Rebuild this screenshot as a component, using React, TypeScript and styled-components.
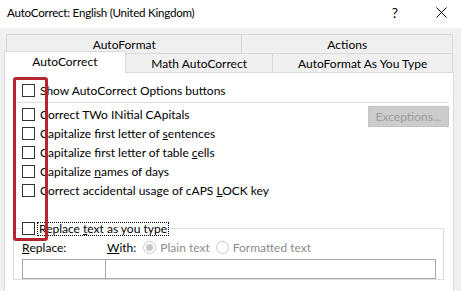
import styled, { createGlobalStyle } from 'styled-components'

const font = `"Lato", "Liberation Sans", sans-serif`

const Global = createGlobalStyle`
  html, body { margin: 0; padding: 0; }
  body {
    width: 461px;
    height: 291px;
    overflow: hidden;
    background: #f0f0f0;
    font-family: ${font};
    font-size: 12px;
    color: #000;
  }
`

const Window = styled.div`
  position: relative;
  width: 461px;
  height: 291px;
  background: #f0f0f0;
  overflow: hidden;
`

const TitleBar = styled.div`
  height: 28px;
  background: #fff;
  display: flex;
  align-items: center;
  padding-left: 7px;
`

const Title = styled.div`
  flex: 1;
  font-size: 11.6px;
  letter-spacing: -0.25px;
  margin-top: -3px;
`

const TitleButton = styled.div<{ w: number }>`
  width: ${p => p.w}px;
  height: 28px;
  display: flex;
  align-items: center;
  justify-content: center;
  font-size: 14px;
  margin-top: -3px;
`

const Body = styled.div`
  padding: 6px 7px 0 4px;
`

const TabRow = styled.div<{ indent?: number }>`
  display: flex;
  align-items: flex-end;
  margin-left: ${p => p.indent || 0}px;
  margin-right: 1px;
  height: 19px;
`

const Tab = styled.div<{ w: number, active?: boolean }>`
  width: ${p => p.w}px;
  height: ${p => p.active ? 22 : 19}px;
  box-sizing: border-box;
  margin-left: -1px;
  margin-bottom: ${p => p.active ? -1 : 0}px;
  position: relative;
  z-index: ${p => p.active ? 2 : 1};
  border: 1px solid #d9d9d9;
  border-bottom: none;
  background: ${p => p.active ? '#fff' : '#f0f0f0'};
  display: flex;
  align-items: center;
  justify-content: center;
  padding-bottom: ${p => p.active ? 2 : 0}px;
  white-space: nowrap;
  &:first-child { margin-left: 0; }
`

const Panel = styled.div`
  background: #fff;
  border: 1px solid #d9d9d9;
  height: 240px;
  box-sizing: border-box;
  padding: 8px 4px 0 0;
`

const Row = styled.div`
  display: flex;
  align-items: center;
  height: 19px;
  padding-left: 17px;
`

const Gap = styled.div`
  height: 19px;
`

const Separator = styled.div`
  height: 1px;
  background: #dcdcdc;
  margin: 2px 0 2px 12px;
`

const Box = styled.span`
  width: 13px;
  height: 13px;
  box-sizing: border-box;
  border: 1px solid #333;
  background: #fff;
  flex: none;
`

const Label = styled.span<{ focused?: boolean }>`
  margin-left: ${p => p.focused ? 2 : 4}px;
  padding: 0 ${p => p.focused ? 1 : 0}px;
  line-height: 12px;
  border: 1px dotted ${p => p.focused ? '#000' : 'transparent'};
  white-space: nowrap;
`

const Button = styled.div`
  margin-left: auto;
  align-self: flex-start;
  margin-top: 1px;
  width: 81px;
  height: 21px;
  box-sizing: border-box;
  border: 1px solid #c4c4c4;
  background: #cccccc;
  color: #9b9b9b;
  display: flex;
  align-items: center;
  justify-content: center;
`

const Group = styled.fieldset`
  margin: 0 5px 0 8px;
  padding: 0 7px 0 8px;
  border: 1px solid #dcdcdc;
  min-width: 0;
`

const Legend = styled.legend`
  padding: 0;
  display: flex;
  align-items: center;
  height: 19px;
  background: #fff;
`

const FieldGrid = styled.div`
  display: grid;
  grid-template-columns: 84px 1fr;
`

const FieldLabels = styled.div`
  display: flex;
  align-items: center;
  height: 19px;
  margin-bottom: 2px;
`

const WithLabel = styled.span`
  margin-left: 1px;
`

const Radio = styled.span<{ checked?: boolean }>`
  width: 13px;
  height: 13px;
  box-sizing: border-box;
  border-radius: 50%;
  border: 1px solid #c8c8c8;
  display: flex;
  align-items: center;
  justify-content: center;
  margin-left: ${p => p.checked ? 7 : 6}px;
  &::after {
    content: '';
    width: 7px;
    height: 7px;
    border-radius: 50%;
    background: ${p => p.checked ? '#c8c8c8' : 'transparent'};
  }
`

const Dim = styled.span`
  color: #8c8c8c;
  margin-left: 4px;
`

const Input = styled.div<{ first?: boolean }>`
  height: 20px;
  box-sizing: border-box;
  border: 1px solid #a8a8a8;
  border-left-width: ${p => p.first ? 1 : 0}px;
  background: #fff;
`

const Highlight = styled.div`
  position: absolute;
  left: 13px;
  top: 77px;
  width: 35px;
  height: 164px;
  box-sizing: border-box;
  border: 3px solid #b3262e;
  border-radius: 3px;
  pointer-events: none;
`

const Check = ({ children, focused }: { children: React.ReactNode, focused?: boolean }) => (
  <>
    <Box />
    <Label focused={focused}>{children}</Label>
  </>
)

function App() {
  return (
    <Window>
      <Global />
      <TitleBar>
        <Title>AutoCorrect: English (United Kingdom)</Title>
        <TitleButton w={52}>?</TitleButton>
        <TitleButton w={40}>
          <svg width="11" height="11" viewBox="0 0 11 11">
            <path d="M0.5 0.5 L10.5 10.5 M10.5 0.5 L0.5 10.5" stroke="#000" strokeWidth="1" />
          </svg>
        </TitleButton>
      </TitleBar>
      <Body>
        <TabRow indent={2}>
          <Tab w={237}>AutoFormat</Tab>
          <Tab w={212}>Actions</Tab>
        </TabRow>
        <TabRow>
          <Tab w={122} active>AutoCorrect</Tab>
          <Tab w={149}>Math AutoCorrect</Tab>
          <Tab w={181}>AutoFormat As You Type</Tab>
        </TabRow>
        <Panel>
          <Row><Check>Show AutoCorrect Options buttons</Check></Row>
          <Separator />
          <Row>
            <Check>Correct TWo INitial CApitals</Check>
            <Button>Exceptions...</Button>
          </Row>
          <Row><Check>Capitalize first letter of <u>s</u>entences</Check></Row>
          <Row><Check>Capitalize first letter of table <u>c</u>ells</Check></Row>
          <Row><Check>Capitalize <u>n</u>ames of days</Check></Row>
          <Row><Check>Correct accidental usage of cAPS <u>L</u>OCK key</Check></Row>
          <Gap />
          <Group>
            <Legend><Check focused>Replace <u>t</u>ext as you type</Check></Legend>
            <FieldGrid>
              <FieldLabels><u>R</u>eplace:</FieldLabels>
              <FieldLabels>
                <WithLabel><u>W</u>ith:</WithLabel>
                <Radio checked />
                <Dim>Plain text</Dim>
                <Radio />
                <Dim>Formatted text</Dim>
              </FieldLabels>
              <Input first />
              <Input />
            </FieldGrid>
          </Group>
        </Panel>
      </Body>
      <Highlight />
    </Window>
  )
}

export default App
